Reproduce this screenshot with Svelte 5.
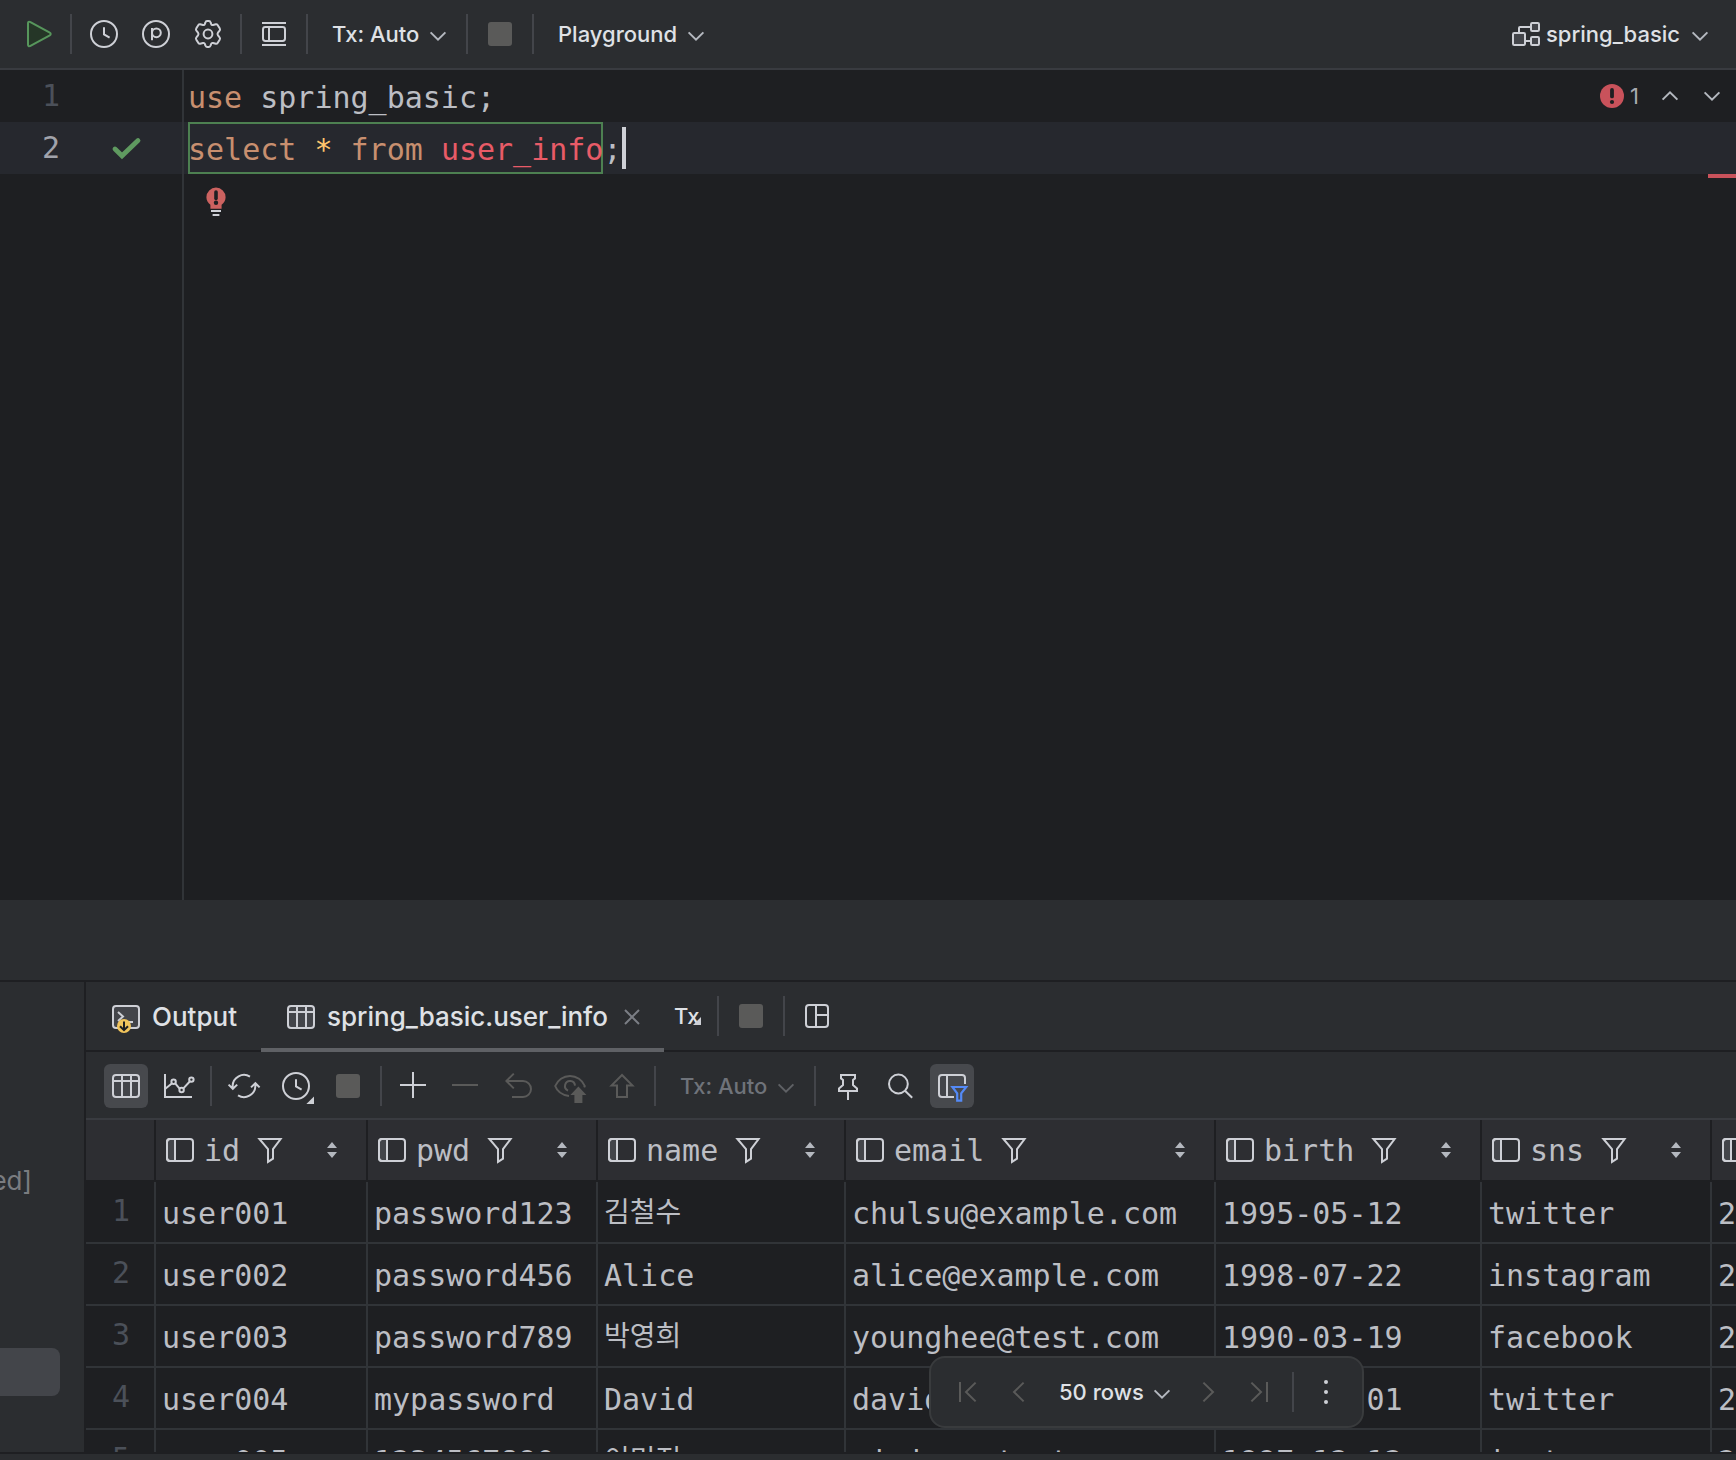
<script>
	let txMode = 'Tx: Auto';
	let resultTxMode = 'Tx: Auto';
	let resolveMode = 'Playground';
	let schema = 'spring_basic';
	let pageSize = '50 rows';

	const columns = [
		{ name: 'id', width: 212 },
		{ name: 'pwd', width: 230 },
		{ name: 'name', width: 248 },
		{ name: 'email', width: 370 },
		{ name: 'birth', width: 266 },
		{ name: 'sns', width: 230 },
		{ name: 'reg_date', width: 270 }
	];

	const rows = [
		['user001', 'password123', '김철수', 'chulsu@example.com', '1995-05-12', 'twitter', '2'],
		['user002', 'password456', 'Alice', 'alice@example.com', '1998-07-22', 'instagram', '2'],
		['user003', 'password789', '박영희', 'younghee@test.com', '1990-03-19', 'facebook', '2'],
		['user004', 'mypassword', 'David', 'david@example.com', '1992-11-01', 'twitter', '2'],
		['user005', '1234567890', '이민정', 'minjung@test.com', '1997-12-12', 'instagram', '2']
	];

	const isHangul = (value) => /[가-힣]/.test(value);
</script>

{#snippet chevron()}
	<svg class="icon chevron" viewBox="0 0 16 16" aria-hidden="true"><path d="M4.3 7.2 8 10.8l3.7-3.6" /></svg>
{/snippet}

{#snippet stop()}
	<svg class="icon" viewBox="0 0 16 16" aria-hidden="true"><rect x="2" y="2" width="12" height="12" rx="1.5" fill="#5a5a59" stroke="none" /></svg>
{/snippet}

{#snippet clock()}
	<circle cx="8" cy="8" r="6.5" /><path d="M8 4.6V8.2l2.8 1.6" />
{/snippet}

{#snippet tableGlyph()}
	<rect x="1.5" y="2.5" width="13" height="11" rx="1.5" fill="#43454a" /><path d="M1.5 5.5h13M6 2.5v11M10.5 2.5v11" />
{/snippet}

<div class="app">
	<header class="toolbar">
		<button aria-label="Execute">
			<svg class="icon" viewBox="0 0 16 16"><path d="M3 2.6v10.8c0 .6.5.9 1 .6l9.900-5.300c.6-.3.6-1.100 0-1.400L4 2C3.500 1.700 3 2 3 2.600z" fill="#253627" stroke="#57965c" /></svg>
		</button>
		<span class="sep"></span>
		<div class="group">
			<button aria-label="History"><svg class="icon" viewBox="0 0 16 16">{@render clock()}</svg></button>
			<button aria-label="Parameters">
				<svg class="icon" viewBox="0 0 16 16"><circle cx="8" cy="8" r="6.5" /><path d="M6 11.100V5" /><circle cx="8.200" cy="7.400" r="2.200" /></svg>
			</button>
			<button aria-label="Settings">
				<svg class="icon" viewBox="0 0 16 16"><circle cx="8" cy="8" r="2.200" /><path d="M6.700 2.200Q6.900 1.500 7.500 1.500H8.500Q9.100 1.500 9.300 2.200L9.600 3.100Q9.800 3.700 10.500 3.500L11.900 3.100Q12.500 3 12.800 3.500L13.900 5.300Q14.200 5.900 13.800 6.300L13 7.300Q12.500 8 13 8.700L13.800 9.700Q14.200 10.100 13.900 10.700L12.800 12.500Q12.500 13 11.900 12.900L10.500 12.500Q9.800 12.300 9.600 12.900L9.300 13.800Q9.100 14.500 8.500 14.500H7.500Q6.900 14.500 6.700 13.800L6.400 12.900Q6.200 12.300 5.500 12.500L4.100 12.900Q3.500 13 3.200 12.500L2.100 10.700Q1.800 10.100 2.200 9.700L3 8.700Q3.500 8 3 7.300L2.200 6.300Q1.800 5.900 2.100 5.300L3.200 3.500Q3.500 3 4.100 3.100L5.500 3.500Q6.200 3.700 6.400 3.100Z" /></svg>
			</button>
		</div>
		<span class="sep"></span>
		<button aria-label="In-editor results">
			<svg class="icon" viewBox="0 0 16 16"><rect x="2.500" y="4.500" width="11" height="7" rx="1.200" /><path d="M2 2.500h12M2 13.500h12M5.500 4.500v7" /></svg>
		</button>
		<span class="sep"></span>
		<div class="dropdown">
			<select aria-label="Transaction mode" bind:value={txMode}><option>Tx: Auto</option></select>
			{@render chevron()}
		</div>
		<span class="sep after-dropdown"></span>
		<button aria-label="Cancel running statements">{@render stop()}</button>
		<span class="sep"></span>
		<div class="dropdown">
			<select aria-label="Resolve mode" bind:value={resolveMode}><option>Playground</option></select>
			{@render chevron()}
		</div>
		<div class="dropdown schema">
			<svg class="icon" viewBox="0 0 16 16" aria-hidden="true"><g fill="#43454a"><rect x="1.500" y="7.500" width="6" height="6" rx=".6" /><rect x="10.500" y="2.500" width="4" height="4" rx=".6" /><rect x="10.500" y="9.500" width="4" height="4" rx=".6" /></g><path d="M4.500 7.500v-2.500q0-.5.5-.5h5.500M7.500 11.500h3" /></svg>
			<select aria-label="Schema" bind:value={schema}><option>spring_basic</option></select>
			{@render chevron()}
		</div>
	</header>

	<main class="editor">
		<div class="line">
			<span class="gutter"><span class="number">1</span></span>
			<code><span class="keyword">use</span> spring_basic;</code>
		</div>
		<div class="line current">
			<span class="gutter">
				<span class="number">2</span>
				<svg class="icon" viewBox="0 0 16 16" role="img" aria-label="Executed"><path d="M2.500 8.500l3.500 3.400L14 4.300" stroke="#5f9a60" stroke-width="2.400" stroke-linecap="round" /></svg>
			</span>
			<code><span class="statement"><span class="keyword">select</span> <span class="star">*</span> <span class="keyword">from</span> <span class="unresolved">user_info</span></span>;</code><span class="caret"></span>
		</div>
		<div class="line rest">
			<span class="gutter"></span>
			<button class="bulb" aria-label="Show quick fixes">
				<svg class="icon" viewBox="0 0 16 16"><path d="M8 .8a4.800 4.800 0 0 0-4.800 4.800c0 1.700.8 2.800 2 3.800v2h5.600v-2c1.200-1 2-2.100 2-3.800A4.800 4.800 0 0 0 8 .8z" fill="#cc6260" stroke="none" /><path d="M8 3v3.200" stroke="#1e1f22" stroke-width="1.800" stroke-linecap="round" /><circle cx="8" cy="8.400" r="1.100" fill="#1e1f22" stroke="none" /><path d="M5.500 12.500h5M6.300 14.500h3.400" /></svg>
			</button>
		</div>
		<div class="inspections">
			<svg class="icon" viewBox="0 0 16 16" role="img" aria-label="Errors"><circle cx="8" cy="8" r="6" fill="#c9525b" stroke="none" /><path d="M8 5v3.200" stroke="#1e1f22" stroke-width="1.900" stroke-linecap="round" /><circle cx="8" cy="11" r="1.050" fill="#1e1f22" stroke="none" /></svg>
			<span>1</span>
			<button class="previous" aria-label="Previous error"><svg class="icon chevron" viewBox="0 0 16 16"><path d="M4.300 9.800 8 6.200l3.700 3.600" /></svg></button>
			<button aria-label="Next error"><svg class="icon chevron" viewBox="0 0 16 16"><path d="M4.300 6.200 8 9.800l3.700-3.600" /></svg></button>
		</div>
		<span class="stripe"></span>
	</main>

	<div class="splitter"></div>

	<section class="services">
		<aside>
			<div class="node">ed]</div>
			<div class="node selected"></div>
		</aside>

		<div class="results">
			<nav class="tabs">
				<button class="tab">
					<svg class="icon" viewBox="0 0 16 16"><rect x="1.500" y="2.500" width="13" height="11" rx="1.500" fill="#43454a" /><path d="M4 5.500l2.500 2.300L4 10M8.500 10.500h3" /><circle cx="7" cy="12.500" r="3.500" fill="#f2c55c" stroke="none" /><path d="M7 10.200v4.200M5 12.600l2 2 2-2" stroke="#1e1f22" /></svg>
					Output
				</button>
				<div class="tab active">
					<button class="tab-label">
						<svg class="icon" viewBox="0 0 16 16">{@render tableGlyph()}</svg>
						spring_basic.user_info
					</button>
					<button class="close" aria-label="Close tab"><svg class="icon" viewBox="0 0 16 16"><path d="M4.500 4.500l7 7M11.500 4.500l-7 7" /></svg></button>
				</div>
				<button class="tx" aria-label="Transaction">Tx<svg viewBox="0 0 8 8"><path d="M8 0v8H0z" /></svg></button>
				<span class="sep"></span>
				<button aria-label="Stop">{@render stop()}</button>
				<span class="sep"></span>
				<button aria-label="Layout">
					<svg class="icon" viewBox="0 0 16 16"><rect x="2.500" y="2.500" width="11" height="11" rx="1.500" /><path d="M7.500 2.500v11M7.500 7.500h6" /></svg>
				</button>
			</nav>

			<div class="toolbar grid-toolbar">
				<div class="group">
					<button class="toggled" aria-label="Table view"><svg class="icon" viewBox="0 0 16 16">{@render tableGlyph()}</svg></button>
					<button aria-label="Chart view">
						<svg class="icon" viewBox="0 0 16 16"><path d="M1.500 2v11.500H15M1.500 9.500 4.900 6.700M6.700 6.800l2.100 2.500M10.700 9.200l3.300-3.600" /><circle cx="5.800" cy="5.900" r="1.100" /><circle cx="9.800" cy="10" r="1.100" /><circle cx="14.700" cy="4.800" r="1.100" /></svg>
					</button>
				</div>
				<span class="sep"></span>
				<div class="group">
					<button aria-label="Reload page">
						<svg class="icon" viewBox="0 0 16 16"><path d="M11 3.300A5.700 5.700 0 0 0 2.300 8v1.200M.3 7.300l2.100 2.100 2.200-2.100M5 12.700A5.700 5.700 0 0 0 13.700 8V6.800M11.500 8.700l2.200-2.100 2.100 2.100" /></svg>
					</button>
					<button aria-label="Auto update">
						<svg class="icon" viewBox="0 0 16 16">{@render clock()}<path d="M17 13.200v3.800h-3.800z" fill="#ced0d6" stroke="none" /></svg>
					</button>
					<button aria-label="Cancel">{@render stop()}</button>
				</div>
				<span class="sep"></span>
				<div class="group">
					<button aria-label="Add row"><svg class="icon" viewBox="0 0 16 16"><path d="M7.500 1v13M1 7.500h13" /></svg></button>
					<button disabled aria-label="Delete row"><svg class="icon" viewBox="0 0 16 16"><path d="M1 7.500h13" /></svg></button>
					<button disabled aria-label="Revert"><svg class="icon" viewBox="0 0 16 16"><path d="M5.900 1.800 2.200 5.500l3.700 3.700M2.400 5.500h8.100a4 4 0 0 1 0 8H5" /></svg></button>
					<button disabled aria-label="Preview changes">
						<svg class="icon" viewBox="0 0 16 16"><path d="M7.500 13C4 12.500 1.500 10.500.6 8 1.800 5 4.700 3 8 3s6.200 2 7.400 5l-.3.700M7 10.300A2.500 2.500 0 1 1 10.500 7.800" /><path d="M12.200 8.300l4 4.200h-2v4h-4v-4H8.200z" fill="#5a5a59" stroke="none" /></svg>
					</button>
					<button disabled aria-label="Submit"><svg class="icon" viewBox="0 0 16 16"><path d="M8 2.500 2.800 7.700h2.700v5.800h5V7.700h2.700z" /></svg></button>
				</div>
				<span class="sep"></span>
				<div class="dropdown">
					<select disabled aria-label="Result transaction mode" bind:value={resultTxMode}><option>Tx: Auto</option></select>
					{@render chevron()}
				</div>
				<span class="sep after-dropdown"></span>
				<div class="group">
					<button aria-label="Pin tab"><svg class="icon" viewBox="0 0 16 16"><path d="M4.500 2.500h7v1.700l-1 .8v2.500l2 1.700v1.300H3.500V9.200l2-1.700V5l-1-.8zM8 10.500v4.500" /></svg></button>
					<button aria-label="Find"><svg class="icon" viewBox="0 0 16 16"><circle cx="7.200" cy="7" r="4.700" /><path d="M10.500 10.400l3.600 3.500" /></svg></button>
					<button class="toggled" aria-label="Local filter">
						<svg class="icon" viewBox="0 0 16 16"><path d="M5.500 2.500H3A1.500 1.500 0 0 0 1.500 4v8A1.500 1.500 0 0 0 3 13.500h2.500z" fill="#43454a" /><path d="M5.500 2.500H13A1.500 1.500 0 0 1 14.500 4v3M5.500 13.500h3.500" /><path d="M8.200 8.500h6.900l-2.500 3.200v3.600h-2v-3.600z" stroke="#548af7" stroke-width="1.100" /></svg>
					</button>
				</div>
			</div>

			<div class="grid">
				<table>
					<colgroup>
						<col style="width: 70px" />
						{#each columns as column}
							<col style="width: {column.width}px" />
						{/each}
					</colgroup>
					<thead>
						<tr>
							<th></th>
							{#each columns as column}
								<th>
									<div class="column">
										<svg class="icon" viewBox="0 0 16 16"><path d="M5.500 2.500H3A1.500 1.500 0 0 0 1.500 4v8A1.500 1.500 0 0 0 3 13.500h2.500z" fill="#43454a" /><rect x="1.500" y="2.500" width="13" height="11" rx="1.500" /><path d="M5.500 2.500v11" /></svg>
										<span>{column.name}</span>
										<button aria-label="Filter {column.name}"><svg class="icon" viewBox="0 0 16 16"><path d="M2.700 2.500h10.600L9.500 7.600v4.700l-2.500 1.600V7.600z" /></svg></button>
										<button class="sort" aria-label="Sort by {column.name}"><svg viewBox="0 0 10 16"><path d="M5 0l5 6H0zM5 16l5-6H0z" /></svg></button>
									</div>
								</th>
							{/each}
						</tr>
					</thead>
					<tbody>
						{#each rows as row, i}
							<tr>
								<th scope="row">{i + 1}</th>
								{#each row as value}
									<td class:hangul={isHangul(value)}>{value}</td>
								{/each}
							</tr>
						{/each}
					</tbody>
				</table>

				<div class="pager">
					<div class="group">
						<button disabled aria-label="First page"><svg class="icon" viewBox="0 0 16 16"><path d="M4.500 3v10M12.300 3.300 7.500 8l4.800 4.700" /></svg></button>
						<button disabled aria-label="Previous page"><svg class="icon" viewBox="0 0 16 16"><path d="M10.300 3.300 5.500 8l4.800 4.700" /></svg></button>
					</div>
					<div class="dropdown">
						<select aria-label="Page size" bind:value={pageSize}><option>50 rows</option></select>
						{@render chevron()}
					</div>
					<div class="group next">
						<button disabled aria-label="Next page"><svg class="icon" viewBox="0 0 16 16"><path d="M5.700 3.300 10.500 8l-4.800 4.700" /></svg></button>
						<button disabled aria-label="Last page"><svg class="icon" viewBox="0 0 16 16"><path d="M3.700 3.300 8.500 8l-4.800 4.700M11.500 3v10" /></svg></button>
					</div>
					<span class="sep"></span>
					<button aria-label="More"><svg class="icon" viewBox="0 0 16 16"><g fill="#ced0d6" stroke="none"><circle cx="8" cy="3" r="1" /><circle cx="8" cy="8" r="1" /><circle cx="8" cy="13" r="1" /></g></svg></button>
				</div>
			</div>
			<div class="scrollbar"></div>
		</div>
	</section>
</div>

<style>
	:global(body) {
		margin: 0;
		background: #1e1f22;
	}

	.app {
		display: flex;
		flex-direction: column;
		height: 100vh;
		overflow: hidden;
		color: #dfe1e5;
		font: 500 22px/32px Inter, 'Noto Sans CJK KR', sans-serif;
		background: #1e1f22;
	}

	button,
	select {
		margin: 0;
		padding: 0;
		border: none;
		outline: none;
		background: none;
		color: inherit;
		font: inherit;
	}

	button {
		display: flex;
		flex: none;
		align-items: center;
	}

	select {
		appearance: none;
		padding-right: 34px;
		opacity: 1;
	}

	svg {
		flex: none;
		display: block;
		overflow: visible;
	}

	.icon {
		width: 32px;
		height: 32px;
		fill: none;
		stroke: #ced0d6;
	}

	.chevron {
		stroke: #b4b8bf;
	}

	.toolbar {
		display: flex;
		flex: none;
		align-items: center;
		box-sizing: border-box;
		height: 70px;
		padding: 0 20px 0 22px;
		border-bottom: 2px solid #393b40;
		background: #2b2d30;
	}

	.group {
		display: flex;
		gap: 20px;
	}

	.sep {
		flex: none;
		width: 2px;
		height: 40px;
		margin: 0 16px;
		background: #43454a;
	}

	.dropdown {
		display: flex;
		align-items: center;
		margin-left: 8px;
	}

	.dropdown .chevron {
		margin-left: -32px;
		pointer-events: none;
	}

	.sep.after-dropdown {
		margin-left: 12px;
	}

	.dropdown.schema {
		gap: 4px;
		margin-left: auto;
	}

	.schema select {
		padding-right: 36px;
	}

	.dropdown.schema .chevron {
		margin-left: -36px;
	}

	/* Editor */
	.editor {
		position: relative;
		display: flex;
		flex: 1;
		flex-direction: column;
		min-height: 0;
		color: #bcbec4;
		font: 400 30px/52px 'DejaVu Sans Mono', monospace;
	}

	.line {
		display: flex;
		height: 52px;
	}

	.line.rest {
		flex: 1;
	}

	.gutter {
		display: flex;
		flex: none;
		align-items: center;
		box-sizing: border-box;
		width: 184px;
		margin-right: 4px;
		border-right: 2px solid #313438;
	}

	.number {
		width: 60px;
		margin-right: 50px;
		color: #4b5059;
		line-height: 56px;
		text-align: right;
	}

	.current {
		background: #26282e;
	}

	.current .number {
		color: #a1a3ab;
	}

	code {
		font: inherit;
		line-height: 56px;
		white-space: pre;
	}

	.statement {
		display: inline-block;
		height: 52px;
		box-shadow: inset 0 0 0 2px #4d8051;
	}

	.keyword {
		color: #c88f6f;
	}

	.star {
		color: #ffc66d;
	}

	.unresolved {
		color: #e85b67;
	}

	.caret {
		align-self: center;
		width: 4px;
		height: 42px;
		background: #ced0d6;
	}

	.bulb {
		align-self: flex-start;
		margin: 12px;
	}

	.inspections {
		position: absolute;
		top: 0;
		right: 8px;
		display: flex;
		align-items: center;
		height: 52px;
		color: #a8aab0;
		font: 400 22px/32px Inter, sans-serif;
	}

	.inspections span {
		margin-left: 2px;
	}

	.inspections .previous {
		margin: 0 10px 0 15px;
	}

	.stripe {
		position: absolute;
		top: 104px;
		right: 0;
		width: 28px;
		height: 4px;
		background: #c9525b;
	}

	.splitter {
		flex: none;
		height: 80px;
		background: #2b2d30;
	}

	/* Services panel */
	.services {
		display: flex;
		flex: none;
		box-sizing: border-box;
		height: 480px;
		border-top: 2px solid #1e1f22;
		background: #2b2d30;
	}

	aside {
		flex: none;
		box-sizing: border-box;
		width: 86px;
		margin-bottom: 6px;
		padding: 174px 24px 0 0;
		border-right: 2px solid #1e1f22;
		border-bottom: 2px solid #1e1f22;
		overflow: hidden;
	}

	.node {
		display: flex;
		justify-content: flex-end;
		height: 48px;
		padding-right: 28px;
		color: #7a7c80;
		font-size: 26px;
		font-weight: 400;
		line-height: 50px;
	}

	.node.selected {
		margin-top: 144px;
		border-radius: 0 8px 8px 0;
		background: #43454a;
	}

	.results {
		display: flex;
		flex: 1;
		flex-direction: column;
		min-width: 0;
	}

	.tabs {
		display: flex;
		flex: none;
		align-items: center;
		height: 68px;
		border-bottom: 2px solid #1e1f22;
	}

	.tab {
		display: flex;
		align-items: center;
		box-sizing: border-box;
		height: 70px;
		margin-bottom: -2px;
		padding: 0 24px;
		font-size: 26px;
	}

	.tab,
	.tab-label {
		gap: 10px;
	}

	.tab.active {
		gap: 8px;
		padding-right: 16px;
		box-shadow: inset 0 -4px #5f6165;
	}

	.close .icon {
		stroke: #7b7e85;
	}

	.tx {
		margin-left: 10px;
		align-items: flex-end;
	}

	.tx svg {
		width: 8px;
		height: 8px;
		margin: 0 0 7px -6px;
		fill: #ced0d6;
	}

	.grid-toolbar {
		height: 68px;
		padding-top: 2px;
		padding-left: 24px;
	}

	.toggled {
		border-radius: 2px;
		background: #47494d;
		box-shadow: 0 0 0 6px #47494d;
	}

	button:disabled .icon {
		stroke: #5a5a59;
	}

	select:disabled {
		color: #6f737a;
	}

	select:disabled + .chevron {
		stroke: #5f6165;
	}

	/* Result grid */
	.grid {
		position: relative;
		flex: 1;
		min-height: 0;
		overflow: hidden;
		background: #1e1f22;
	}

	table {
		width: max-content;
		table-layout: fixed;
		border-collapse: separate;
		border-spacing: 0;
		color: #bcbec4;
		font: 400 30px/36px 'DejaVu Sans Mono', 'Noto Sans CJK KR', monospace;
	}

	th,
	td {
		box-sizing: border-box;
		height: 62px;
		padding: 4px 0 0 6px;
		border-right: 2px solid #313438;
		border-bottom: 2px solid #313438;
		font-weight: 400;
		text-align: left;
		white-space: nowrap;
		overflow: hidden;
	}

	td.hangul {
		padding-top: 2px;
		font-size: 28px;
	}

	thead th {
		padding: 0;
		border-color: #1e1f22;
		background: #2d2e32;
	}

	tbody th {
		padding: 0 0 2px 2px;
		color: #4b5059;
		text-align: center;
	}

	.column {
		display: flex;
		align-items: center;
		padding: 0 29px 0 8px;
	}

	.column span {
		margin: 0 14px 0 8px;
		padding-top: 2px;
	}

	.column .sort {
		margin-left: auto;
	}

	.sort svg {
		width: 10px;
		height: 16px;
		fill: #b4b8bf;
	}

	.pager {
		position: absolute;
		right: 372px;
		bottom: 24px;
		display: flex;
		align-items: center;
		box-sizing: border-box;
		height: 72px;
		padding: 0 20px;
		border: 2px solid #393b3d;
		border-radius: 16px;
		background: #2b2d30;
	}

	.pager .dropdown {
		margin: 0 14px 0 24px;
	}

	.scrollbar {
		flex: none;
		height: 6px;
		border-top: 2px solid #1e1f22;
	}
</style>
